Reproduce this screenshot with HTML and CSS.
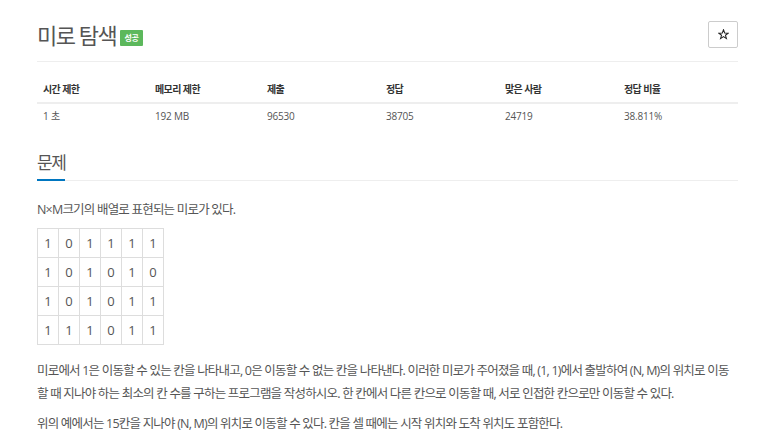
FILE: index.html
```html
<!DOCTYPE html>
<html lang="ko">
<head>
    <meta charset="UTF-8">
    <meta name="viewport" content="width=device-width, initial-scale=1.0">
    <title>미로 탐색</title>
    <link rel="stylesheet" href="styles.css">
</head>
<body>
    <div class="container">
        <div class="page-header">
            <h1 class="title">미로 탐색 <span class="badge">성공</span></h1>
            <button class="star-btn">
                <svg width="11" height="11" viewBox="0 0 12 12">
                    <path d="M6 0.8 L7.3 4.4 L11.1 4.5 L8.1 6.8 L9.2 10.5 L6 8.3 L2.8 10.5 L3.9 6.8 L0.9 4.5 L4.7 4.4 Z" fill="none" stroke="#222" stroke-width="1.1" stroke-linejoin="miter"/>
                </svg>
            </button>
        </div>

        <table class="info-table">
            <thead>
                <tr>
                    <th class="c1">시간 제한</th>
                    <th class="c2">메모리 제한</th>
                    <th class="c3">제출</th>
                    <th class="c4">정답</th>
                    <th class="c5">맞은 사람</th>
                    <th class="c6">정답 비율</th>
                </tr>
            </thead>
            <tbody>
                <tr>
                    <td>1 초</td>
                    <td>192 MB</td>
                    <td>96530</td>
                    <td>38705</td>
                    <td>24719</td>
                    <td>38.811%</td>
                </tr>
            </tbody>
        </table>

        <div class="section-headline">
            <h2>문제</h2>
        </div>

        <div class="description">
            <p>N×M크기의 배열로 표현되는 미로가 있다.</p>
            <table class="maze">
                <tr><td>1</td><td>0</td><td>1</td><td>1</td><td>1</td><td>1</td></tr>
                <tr><td>1</td><td>0</td><td>1</td><td>0</td><td>1</td><td>0</td></tr>
                <tr><td>1</td><td>0</td><td>1</td><td>0</td><td>1</td><td>1</td></tr>
                <tr><td>1</td><td>1</td><td>1</td><td>0</td><td>1</td><td>1</td></tr>
            </table>
            <p>미로에서 1은 이동할 수 있는 칸을 나타내고, 0은 이동할 수 없는 칸을 나타낸다. 이러한 미로가 주어졌을 때, (1, 1)에서 출발하여 (N, M)의 위치로 이동할 때 지나야 하는 최소의 칸 수를 구하는 프로그램을 작성하시오. 한 칸에서 다른 칸으로 이동할 때, 서로 인접한 칸으로만 이동할 수 있다.</p>
            <p>위의 예에서는 15칸을 지나야 (N, M)의 위치로 이동할 수 있다. 칸을 셀 때에는 시작 위치와 도착 위치도 포함한다.</p>
        </div>
    </div>
</body>
</html>
```

FILE: styles.css
```css
body {
    font-family: "Open Sans", "Noto Sans CJK KR", sans-serif;
    background-color: #fff;
    color: #555;
    margin: 0;
    padding: 0;
}
.container {
    padding: 0 30px 0 37px;
}
.page-header {
    display: flex;
    justify-content: space-between;
    align-items: flex-start;
    padding-top: 20px;
    padding-bottom: 11px;
    border-bottom: 1px solid #eee;
}
.title {
    margin: 0;
    font-size: 22px;
    font-weight: normal;
    letter-spacing: -1.5px;
    line-height: 30px;
    color: #555;
}
.badge {
    display: inline-block;
    vertical-align: 3px;
    background-color: #5cb85c;
    color: white;
    font-size: 8px;
    font-weight: bold;
    letter-spacing: -0.3px;
    line-height: 16px;
    padding: 0 4px;
    border-radius: 1px;
}
.star-btn {
    display: flex;
    align-items: center;
    justify-content: center;
    width: 30px;
    height: 27px;
    margin-top: 1px;
    padding: 0;
    background: white;
    border: 1px solid #ccc;
    border-radius: 2px;
}
.info-table {
    width: 100%;
    table-layout: fixed;
    border-collapse: collapse;
    margin-top: 14px;
    font-size: 10px;
    line-height: 12px;
    color: #333;
}
.info-table th {
    text-align: left;
    font-weight: bold;
    letter-spacing: -0.6px;
    padding: 7px 6px 7px;
    border-bottom: 2px solid #eee;
}
.info-table td {
    text-align: left;
    padding: 6px 6px;
    color: #555;
    letter-spacing: -0.2px;
}
.c1, .c2 { width: 100px; }
.c3, .c4, .c5 { width: 107px; }
.section-headline {
    margin-top: 23px;
    border-bottom: 1px solid #eee;
}
.section-headline h2 {
    display: inline-block;
    margin: 0;
    font-size: 17px;
    font-weight: normal;
    letter-spacing: -1.5px;
    line-height: 24px;
    padding-bottom: 4px;
    border-bottom: 2px solid #0076c0;
    margin-bottom: -1px;
    color: #555;
}
.description {
    font-size: 12.5px;
    letter-spacing: -0.8px;
    line-height: 23px;
    margin-top: 17px;
}
.description p {
    margin: 0 0 7px;
}
.maze {
    border-collapse: collapse;
    margin: 6px 0 14px;
    font-size: 13px;
    letter-spacing: 0;
    color: #555;
}
.maze td {
    border: 1px solid #ddd;
    width: 20px;
    height: 28px;
    padding: 0;
    text-align: center;
    line-height: 28px;
}
```
